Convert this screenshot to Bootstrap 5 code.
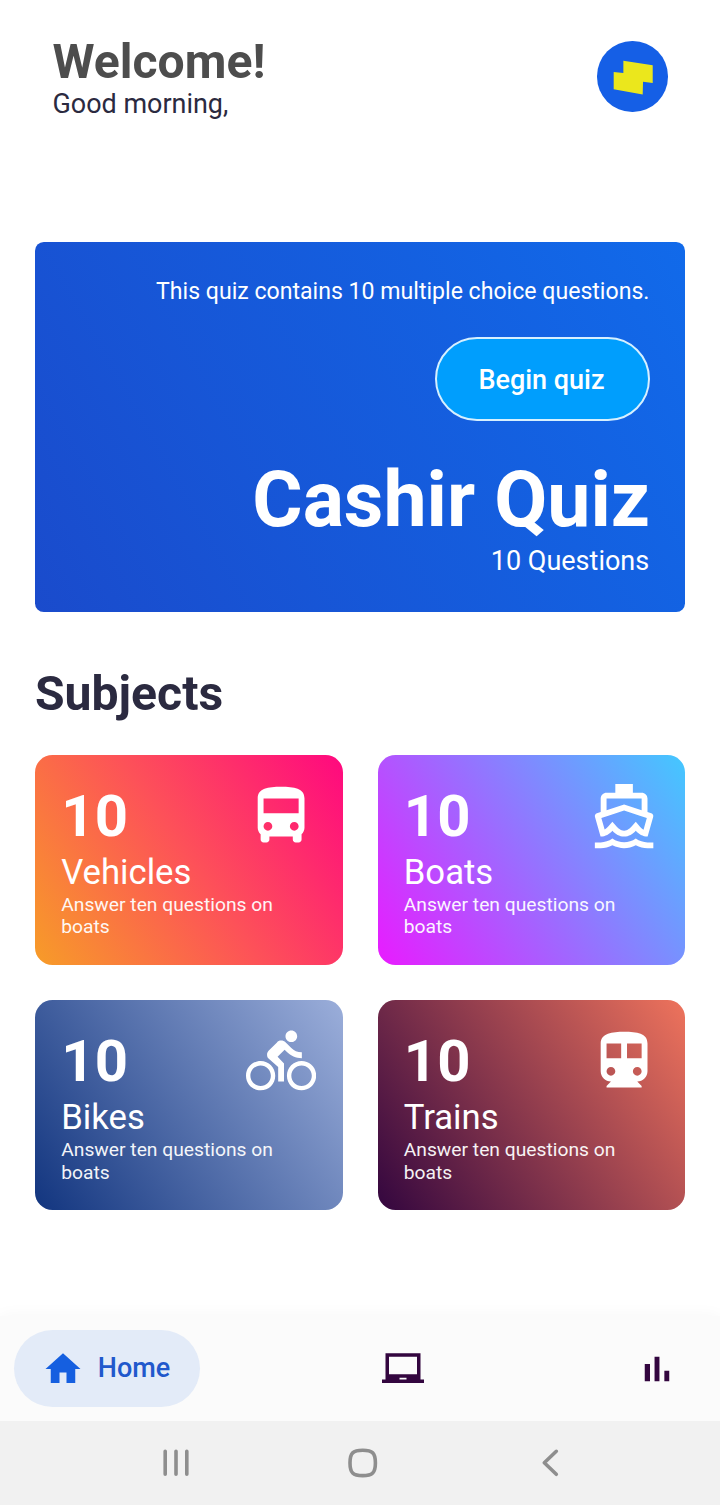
<!DOCTYPE html>
<html lang="en">
<head>
<meta charset="utf-8">
<meta name="viewport" content="width=device-width, initial-scale=1">
<title>Cashir Quiz</title>
<link href="https://cdn.jsdelivr.net/npm/bootstrap@5.3.0/dist/css/bootstrap.min.css" rel="stylesheet">
<style>
  body { font-family: Roboto, sans-serif; color: #2b2a40; background: #fff; }
  .screen { height: 1505px; }
  .top-area { padding: 35.5px 52.5px 0; height: 242.4px; }
  .welcome { font-size: 48.1px; line-height: 52px; font-weight: 700; color: #4d4d4d; }
  .greeting { font-size: 26.95px; line-height: 32px; }
  .avatar { width: 70.4px; height: 70.4px; margin-top: 5.8px; background: #155fe6; }
  .page-pad { padding: 0 35px; }
  .hero { height: 369.2px; padding: 36px 35px 0; border-radius: 8.75px; background: linear-gradient(60.4deg, #1a4bcc, #116aea); }
  .hero-note { font-size: 23.1px; line-height: 28px; padding-right: .6px; }
  .btn-quiz { width: 215px; height: 84px; margin: 30.4px 0 34px; border: 2px solid #d6f0ff; border-radius: 42px; background: #009efd; color: #fff; font-size: 27px; font-weight: 500; }
  .btn-quiz span { display: block; padding: 2px 2px 0 0; }
  .btn-quiz:hover { background: #008fe6; color: #fff; border-color: #fff; }
  .hero-title { font-size: 77px; line-height: 90px; font-weight: 700; }
  .hero-count { font-size: 27px; line-height: 33px; padding-right: .8px; }
  .section-title { font-size: 48.1px; line-height: 56px; font-weight: 700; margin: 54px 0 33.4px; }
  .subjects { display: grid; grid-template-columns: 1fr 1fr; gap: 35px; }
  .subject { height: 210px; padding: 26.5px 26.25px 0; border: 0; border-radius: 17.5px; color: #fff; }
  .subject svg { width: 70.2px; height: 70.2px; fill: #fff; }
  .num { font-size: 58px; line-height: 68px; font-weight: 700; margin-top: .8px; letter-spacing: .3px; }
  .name { font-size: 34.7px; line-height: 41px; }
  .desc { font-size: 19.25px; line-height: 22.5px; margin-top: 1px; opacity: .94; }
  .g-vehicles { background: linear-gradient(55.7deg, #f79c28, #fd5258 50%, #ff087f); }
  .g-boats { background: linear-gradient(55.7deg, #e91bff, #43c8ff); }
  .g-bikes { background: linear-gradient(55.7deg, #12357f, #9baeda); }
  .g-trains { background: linear-gradient(55.7deg, #33063f, #ee735c); }
  .g-bikes .desc, .g-trains .desc { line-height: 23px; margin-top: .6px; }
  .tabs { height: 105.2px; padding: 0 14px; background: #fbfbfb; box-shadow: 0 0 16px rgba(0,0,0,.04); }
  .tab { height: 77px; padding: 0 28.3px; gap: 13.5px; border-radius: 39px; color: #33063f; text-decoration: none; }
  .tab svg { width: 42px; height: 42px; margin-top: 2px; fill: currentColor; }
  .tab.active { background: #e3ebf8; color: #155fe0; padding-right: 29.3px; }
  .tab span { font-size: 27px; font-weight: 500; line-height: 31px; color: #2158cc; }
  .sysbar { height: 84px; padding: 0 76px 1px 82px; background: #f1f1f1; }
  .sysbar svg { width: 32px; height: 32px; fill: none; stroke: #8e8e8e; stroke-width: 3.6; stroke-linecap: round; stroke-linejoin: round; }
</style>
</head>
<body>
<div class="screen d-flex flex-column overflow-hidden">
  <header class="top-area d-flex justify-content-between align-items-start">
    <div>
      <div class="welcome">Welcome!</div>
      <div class="greeting">Good morning,</div>
    </div>
    <div class="avatar rounded-circle overflow-hidden">
      <svg class="d-block w-100 h-100" viewBox="52 33 211 211"><path fill="#ebe71c" d="M131 92l88 14v53l-29-4-1 38-87-15v-52l29 3z"/></svg>
    </div>
  </header>

  <main class="page-pad flex-grow-1">
    <section class="hero d-flex flex-column align-items-end text-white">
      <div class="hero-note">This quiz contains 10 multiple choice questions.</div>
      <button type="button" class="btn btn-quiz p-0 flex-shrink-0"><span>Begin quiz</span></button>
      <div class="hero-title">Cashir Quiz</div>
      <div class="hero-count">10 Questions</div>
    </section>

    <h2 class="section-title">Subjects</h2>

    <section class="subjects">
      <div class="card subject g-vehicles">
        <div class="d-flex justify-content-between align-items-start">
          <div><div class="num">10</div></div>
          <svg viewBox="0 0 24 24"><path d="M4 16c0 .88.39 1.67 1 2.22V20c0 .55.45 1 1 1h1c.55 0 1-.45 1-1v-1h8v1c0 .55.45 1 1 1h1c.55 0 1-.45 1-1v-1.78c.61-.55 1-1.34 1-2.22V6c0-3.5-3.58-4-8-4s-8 .5-8 4v10zm3.500 1c-.83 0-1.500-.67-1.500-1.500S6.670 14 7.500 14s1.500.67 1.500 1.500S8.330 17 7.500 17zm9 0c-.83 0-1.500-.67-1.500-1.500s.67-1.500 1.500-1.500 1.500.67 1.500 1.500-.67 1.500-1.500 1.500zm1.500-6H6V6h12v5z"/></svg>
        </div>
        <div class="name">Vehicles</div>
        <div class="desc">Answer ten questions on boats</div>
      </div>
      <div class="card subject g-boats">
        <div class="d-flex justify-content-between align-items-start">
          <div><div class="num">10</div></div>
          <svg viewBox="0 0 24 24"><path d="M13 3zm0 0v0zM12 10.110l5.380 1.770 2.390.78-1.120 3.970c-.54-.3-.94-.71-1.140-.94L16 13.960l-1.510 1.720c-.34.4-1.280 1.320-2.490 1.320s-2.150-.92-2.490-1.320L8 13.960l-1.510 1.720c-.2.23-.6.63-1.140.93l-1.130-3.960 2.400-.79L12 10.110M15 1H9v3H6c-1.100 0-2 .9-2 2v4.620l-1.290.42c-.26.08-.48.26-.6.5s-.15.52-.06.78L3.950 19H4c1.600 0 3.020-.88 4-2 .98 1.120 2.400 2 4 2s3.020-.88 4-2c.98 1.120 2.400 2 4 2h.05l1.890-6.680c.08-.26.06-.54-.06-.78s-.34-.42-.6-.5L20 10.620V6c0-1.100-.9-2-2-2h-3V1zM6 9.970V6h12v3.970L12 8 6 9.970zM16 19.680c-1.220.85-2.610 1.280-4 1.280s-2.780-.43-4-1.280C6.780 20.530 5.390 21 4 21H2v2h2c1.380 0 2.740-.35 4-.99 1.260.64 2.630.97 4 .97s2.740-.32 4-.97c1.260.65 2.620.99 4 .99h2v-2h-2c-1.390 0-2.780-.47-4-1.320z"/></svg>
        </div>
        <div class="name">Boats</div>
        <div class="desc">Answer ten questions on boats</div>
      </div>
      <div class="card subject g-bikes">
        <div class="d-flex justify-content-between align-items-start">
          <div><div class="num">10</div></div>
          <svg viewBox="0 0 24 24"><path d="M15.500 5.500c1.100 0 2-.9 2-2s-.9-2-2-2-2 .9-2 2 .9 2 2 2zM5 12c-2.800 0-5 2.200-5 5s2.200 5 5 5 5-2.200 5-5-2.200-5-5-5zm0 8.500c-1.900 0-3.500-1.600-3.500-3.500s1.600-3.500 3.500-3.500 3.500 1.600 3.500 3.500-1.600 3.500-3.500 3.500zm5.800-10l2.400-2.400.8.8c1.300 1.300 3 2.100 5.100 2.100V9c-1.500 0-2.700-.6-3.600-1.500l-1.900-1.900c-.5-.4-1-.6-1.600-.6s-1.100.2-1.400.6L7.800 8.400c-.4.4-.6.9-.6 1.400 0 .6.2 1.100.6 1.400L11 14v5h2v-6.200l-2.200-2.300zM19 12c-2.800 0-5 2.200-5 5s2.200 5 5 5 5-2.200 5-5-2.200-5-5-5zm0 8.500c-1.900 0-3.500-1.600-3.500-3.500s1.600-3.500 3.500-3.500 3.500 1.600 3.500 3.500-1.600 3.500-3.500 3.500z"/></svg>
        </div>
        <div class="name">Bikes</div>
        <div class="desc">Answer ten questions on boats</div>
      </div>
      <div class="card subject g-trains">
        <div class="d-flex justify-content-between align-items-start">
          <div><div class="num">10</div></div>
          <svg viewBox="0 0 24 24"><path d="M12 2c-4 0-8 .5-8 4v9.500C4 17.430 5.570 19 7.500 19L6 20.500v.5h12v-.5L16.500 19c1.930 0 3.500-1.570 3.500-3.500V6c0-3.500-3.580-4-8-4zM7.500 17c-.83 0-1.500-.67-1.500-1.500S6.670 14 7.500 14s1.500.67 1.500 1.500S8.330 17 7.500 17zm3.500-6H6V6h5v5zm2 0V6h5v5h-5zm3.500 6c-.83 0-1.500-.67-1.500-1.500s.67-1.500 1.500-1.500 1.500.67 1.500 1.500-.67 1.500-1.500 1.500z"/></svg>
        </div>
        <div class="name">Trains</div>
        <div class="desc">Answer ten questions on boats</div>
      </div>
    </section>
  </main>

  <nav class="tabs d-flex justify-content-between align-items-center flex-shrink-0">
    <a href="#" class="tab active d-flex align-items-center">
      <svg viewBox="0 0 24 24"><path d="M10 20v-6h4v6h5v-8h3L12 3 2 12h3v8z"/></svg>
      <span>Home</span>
    </a>
    <a href="#" class="tab d-flex align-items-center" aria-label="Courses">
      <svg viewBox="0 0 24 24"><path d="M22 18V3H2v15H0v2h24v-2h-2zm-8 0h-4v-1h4v1zm6-3H4V5h16v10z"/></svg>
    </a>
    <a href="#" class="tab d-flex align-items-center" aria-label="Stats">
      <svg viewBox="0 0 24 24"><path d="M5 9.200h3V19H5zM10.600 5h2.800v14h-2.800zm5.600 8H19v6h-2.800z"/></svg>
    </a>
  </nav>

  <footer class="sysbar d-flex align-items-center flex-shrink-0">
    <div class="flex-fill w-100 text-center"><svg viewBox="0 0 32 32"><path d="M5.200 4.300v23M16 4.300v23M26.800 4.300v23"/></svg></div>
    <div class="flex-fill w-100 text-center"><svg viewBox="0 0 32 32"><path d="M15.700 3.200c9.800 0 12.700 2.900 12.700 12.700S25.500 28.600 15.700 28.600 3 25.700 3 15.900 5.900 3.200 15.700 3.200z"/></svg></div>
    <div class="flex-fill w-100 text-center"><svg viewBox="0 0 32 32"><path d="M22.300 4.300L10.300 15.800l12 11.500"/></svg></div>
  </footer>
</div>
<script src="https://cdn.jsdelivr.net/npm/bootstrap@5.3.0/dist/js/bootstrap.bundle.min.js"></script>
</body>
</html>
